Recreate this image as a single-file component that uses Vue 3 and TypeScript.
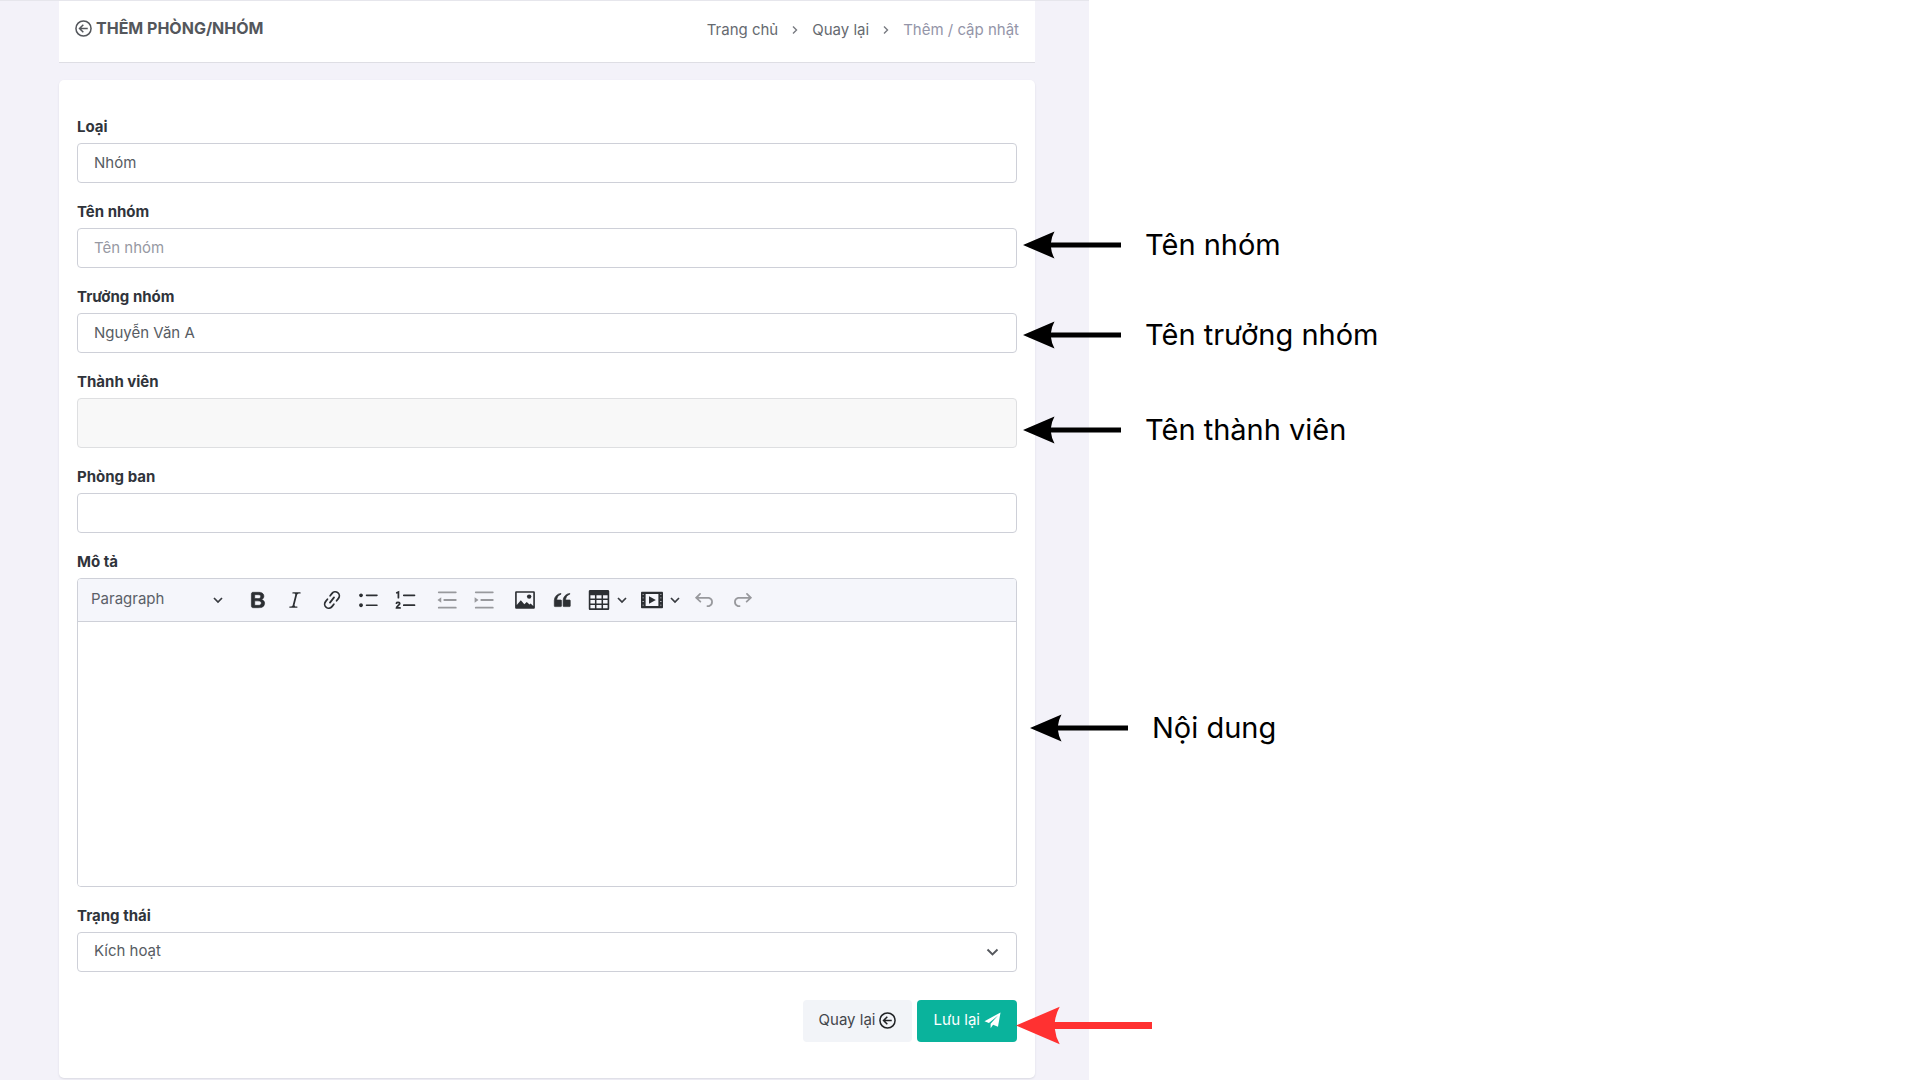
<script setup lang="ts">
import { ref } from 'vue'

interface Note {
  text: string
  top: number
  shift: number
  tone: 'plain' | 'alert'
}

const groupType = ref('Nhóm')
const groupName = ref('')
const leader = ref('Nguyễn Văn A')
const members = ref('')
const department = ref('')
const description = ref('')
const blockStyle = ref('Paragraph')
const status = ref('Kích hoạt')

// top is the arrow's middle line; shift is the arrow tip relative to the panel's right edge
const notes: Note[] = [
  { text: 'Tên nhóm', top: 244, shift: -66, tone: 'plain' },
  { text: 'Tên trưởng nhóm', top: 334, shift: -66, tone: 'plain' },
  { text: 'Tên thành viên', top: 429, shift: -66, tone: 'plain' },
  { text: 'Nội dung', top: 727, shift: -59, tone: 'plain' },
  { text: '', top: 1024, shift: -73, tone: 'alert' },
]
</script>

<template>
  <main class="page">
    <div class="panel">
      <header class="bar">
        <h1 class="title">
          <svg class="round-arrow" viewBox="0 0 18 18" aria-hidden="true">
            <circle cx="9" cy="9" r="8" />
            <path d="M13.5 9H5M8.8 5 4.8 9l4 4" />
          </svg>
          THÊM PHÒNG/NHÓM
        </h1>
        <nav class="crumbs" aria-label="Breadcrumb">
          <a href="#">Trang chủ</a>
          <svg class="crumb-sep" viewBox="0 0 6 10" aria-hidden="true"><path d="M1 1.5 4.5 5 1 8.5" /></svg>
          <a href="#">Quay lại</a>
          <svg class="crumb-sep" viewBox="0 0 6 10" aria-hidden="true"><path d="M1 1.5 4.5 5 1 8.5" /></svg>
          <span class="current">Thêm / cập nhật</span>
        </nav>
      </header>

      <form class="card" @submit.prevent>
        <div class="field">
          <label for="type">Loại</label>
          <input id="type" v-model="groupType" class="control" type="text" />
        </div>
        <div class="field">
          <label for="name">Tên nhóm</label>
          <input id="name" v-model="groupName" class="control" type="text" placeholder="Tên nhóm" />
        </div>
        <div class="field">
          <label for="leader">Trưởng nhóm</label>
          <input id="leader" v-model="leader" class="control" type="text" />
        </div>
        <div class="field">
          <label for="members">Thành viên</label>
          <input id="members" v-model="members" class="control tall" type="text" disabled />
        </div>
        <div class="field">
          <label for="department">Phòng ban</label>
          <input id="department" v-model="department" class="control" type="text" />
        </div>
        <div class="field">
          <label for="description">Mô tả</label>
          <div class="editor">
            <div class="toolbar" role="toolbar" aria-label="Editor">
              <span class="style-pick">
                <select v-model="blockStyle" aria-label="Heading">
                  <option>Paragraph</option>
                </select>
                <svg class="caret" viewBox="0 0 10 8" aria-hidden="true"><path d="M1 2l4 4 4-4" /></svg>
              </span>
              <div class="group">
                <button type="button" class="tool" aria-label="Bold">
                  <svg viewBox="0 0 20 20" class="heavy"><path d="M10.187 17H5.773c-.637 0-1.092-.138-1.364-.415-.273-.277-.409-.718-.409-1.323V4.738c0-.617.14-1.062.419-1.332.279-.27.73-.406 1.354-.406h4.68c.69 0 1.288.041 1.793.124.506.083.96.242 1.36.478.341.197.644.447.906.75a3.262 3.262 0 0 1 .808 2.162c0 1.401-.722 2.426-2.167 3.075C15.05 10.175 16 11.315 16 13.01a3.756 3.756 0 0 1-2.296 3.504 6.1 6.1 0 0 1-1.517.377c-.571.073-1.238.11-2 .11zm-.217-6.217H7v4.087h3.069c1.977 0 2.965-.69 2.965-2.072 0-.707-.256-1.22-.768-1.537-.512-.319-1.277-.478-2.296-.478zM7 5.13v3.619h2.606c.729 0 1.292-.067 1.69-.2a1.6 1.6 0 0 0 .91-.765c.165-.267.247-.566.247-.897 0-.707-.26-1.176-.778-1.409-.519-.232-1.31-.348-2.375-.348H7z" /></svg>
                </button>
                <button type="button" class="tool" aria-label="Italic">
                  <svg viewBox="0 0 20 20"><path d="m9.586 14.633.021.004c-.036.335.095.655.393.962.082.083.173.15.274.201h1.474a.6.6 0 1 1 0 1.2H5.304a.6.6 0 0 1 0-1.2h1.15c.474-.07.809-.182 1.005-.334.157-.122.291-.32.404-.597l2.416-9.55a1.053 1.053 0 0 0-.281-.823 1.12 1.12 0 0 0-.442-.296H8.15a.6.6 0 0 1 0-1.2h6.443a.6.6 0 1 1 0 1.2h-1.195c-.376.056-.65.155-.823.296-.215.175-.423.439-.623.79l-2.366 9.347z" /></svg>
                </button>
                <button type="button" class="tool" aria-label="Link">
                  <svg viewBox="0 0 20 20" class="line"><g transform="rotate(-52 10 10)"><path d="M8 6.3H5.200a3.700 3.700 0 0 0 0 7.400H8M12 6.300h2.800a3.700 3.700 0 0 1 0 7.400H12M7 10h6" /></g></svg>
                </button>
                <button type="button" class="tool" aria-label="Bulleted list">
                  <svg viewBox="0 0 20 20"><path d="M7 5.75c0 .414.336.75.75.75h9.5a.75.75 0 1 0 0-1.5h-9.5a.75.75 0 0 0-.75.75zm-6 0C1 4.784 1.777 4 2.75 4c.966 0 1.75.777 1.75 1.75 0 .966-.777 1.75-1.75 1.75C1.784 7.5 1 6.723 1 5.75zm6 9c0 .414.336.75.75.75h9.5a.75.75 0 1 0 0-1.5h-9.5a.75.75 0 0 0-.75.75zm-6 0c0-.966.777-1.75 1.75-1.75.966 0 1.75.777 1.75 1.75 0 .966-.777 1.75-1.75 1.75-.966 0-1.75-.777-1.75-1.75z" /></svg>
                </button>
                <button type="button" class="tool" aria-label="Numbered list">
                  <svg viewBox="0 0 20 20" class="line"><path d="M8 5.75h9.7M8 14.75h9.7M1.6 3.4l1.5-.6v5.1M1.3 12.9c.3-1 3-1.100 3 .3 0 1.200-2.800 2.300-2.900 4h3.200" /></svg>
                </button>
              </div>
              <div class="group faded">
                <button type="button" class="tool" aria-label="Decrease indent">
                  <svg viewBox="0 0 20 20" class="line"><path d="M2.500 3h15.500M7.500 10H18M2.500 17h15.500" /><path class="solid" d="M4.800 7.500v5L1.300 10z" /></svg>
                </button>
                <button type="button" class="tool" aria-label="Increase indent">
                  <svg viewBox="0 0 20 20" class="line"><path d="M2.500 3h15.500M7.500 10H18M2.500 17h15.500" /><path class="solid" d="M1.500 7.500v5L5 10z" /></svg>
                </button>
              </div>
              <div class="group">
                <button type="button" class="tool" aria-label="Insert image">
                  <svg viewBox="0 0 20 20"><path fill-rule="evenodd" d="M2.200 2h15.600c.7 0 1.200.5 1.200 1.200v13.600c0 .7-.5 1.200-1.200 1.200H2.200c-.7 0-1.200-.5-1.200-1.200V3.200C1 2.500 1.500 2 2.200 2zm.3 1.500v11l3.700-4.300 3.200 3.600 2.200-1.900 2.500 2.200 1-.9 2.400 2.300v-12z" /><circle cx="13.800" cy="6.900" r="2" /></svg>
                </button>
                <button type="button" class="tool" aria-label="Block quote">
                  <svg viewBox="0 0 20 20" class="heavy"><path d="M3 10.423a6.500 6.500 0 0 1 6.056-6.408l.038.670C6.448 5.423 5.354 7.663 5.220 10H9c.552 0 .5.432.5.986v4.511c0 .554-.448.503-1 .503h-5c-.552 0-.5-.449-.5-1.003v-4.574zm8 0a6.500 6.500 0 0 1 6.056-6.408l.038.670c-2.646.739-3.740 2.979-3.873 5.315H17c.552 0 .5.432.5.986v4.511c0 .554-.448.503-1 .503h-5c-.552 0-.5-.449-.5-1.003v-4.574z" /></svg>
                </button>
                <button type="button" class="tool wide" aria-label="Insert table">
                  <svg viewBox="0 0 20 20"><path fill-rule="evenodd" d="M2 .8h16c.8 0 1.300.6 1.300 1.300v15.800c0 .8-.6 1.300-1.300 1.300H2c-.8 0-1.300-.6-1.300-1.300V2.100C.7 1.300 1.200.8 2 .8zM2.200 5.600v3.100h4.100V5.600zm5.500 0v3.100h4.600V5.600zm6 0v3.100h4.100V5.600zM2.200 10v3.100h4.100V10zm5.500 0v3.100h4.600V10zm6 0v3.100h4.100V10zM2.200 14.500v3.100h4.100v-3.100zm5.500 0v3.100h4.600v-3.100zm6 0v3.100h4.100v-3.100z" /></svg>
                  <svg class="caret" viewBox="0 0 10 8"><path d="M1 2l4 4 4-4" /></svg>
                </button>
                <button type="button" class="tool wide" aria-label="Insert media">
                  <svg viewBox="0 0 20 20"><path fill-rule="evenodd" d="M1 2.500h18c.6 0 1 .4 1 1v13c0 .6-.4 1-1 1H1c-.6 0-1-.4-1-1v-13c0-.6.4-1 1-1zM4.200 4.500v11h11.600v-11zM1.500 4.700v.8h.9v-.8zm0 3v.8h.9v-.8zm0 3.300v.8h.9V11zm0 3.300v.8h.9v-.8zM17.600 4.700v.8h.9v-.8zm0 3v.8h.9v-.8zm0 3.300v.8h.9V11zm0 3.300v.8h.9v-.8z" /><path d="M7.300 6.500v7L13.500 10z" /></svg>
                  <svg class="caret" viewBox="0 0 10 8"><path d="M1 2l4 4 4-4" /></svg>
                </button>
                <button type="button" class="tool faded" aria-label="Undo">
                  <svg viewBox="0 0 20 20" class="line"><path d="M5.500 4.500 2 8l3.800 3.500M2.300 8h11.200a3.900 3.900 0 0 1 .2 7.500h-1.500" /></svg>
                </button>
                <button type="button" class="tool faded" aria-label="Redo">
                  <svg viewBox="0 0 20 20" class="line"><path d="M14.500 4.500 18 8l-3.800 3.500M17.700 8H6.500a3.900 3.900 0 0 0-.2 7.500h1.500" /></svg>
                </button>
              </div>
            </div>
            <textarea id="description" v-model="description"></textarea>
          </div>
        </div>
        <div class="field">
          <label for="status">Trạng thái</label>
          <div class="select-box">
            <select id="status" v-model="status" class="control">
              <option>Kích hoạt</option>
            </select>
            <svg class="caret big" viewBox="0 0 10 8" aria-hidden="true"><path d="M1 2l4 4 4-4" /></svg>
          </div>
        </div>
        <div class="actions">
          <button type="button" class="btn light">
            Quay lại
            <svg class="round-arrow" viewBox="0 0 18 18" aria-hidden="true">
              <circle cx="9" cy="9" r="8" />
              <path d="M13.500 9H5M8.800 5 4.800 9l4 4" />
            </svg>
          </button>
          <button type="submit" class="btn primary">
            Lưu lại
            <svg class="plane" viewBox="0 0 18 18" aria-hidden="true">
              <path d="M17.500.5 14.800 15.600 9.600 13.400 7 17.300V12.400L14.800 3.800 5.200 11.600.5 9.700z" />
            </svg>
          </button>
        </div>
      </form>

      <div
        v-for="note in notes"
        :key="note.top"
        class="note"
        :class="note.tone"
        :style="{ top: note.top + 'px', marginLeft: note.shift + 'px' }"
      >
        <svg class="arrow" viewBox="0 0 98 28" aria-hidden="true">
          <path d="M0 14 31.500.5Q28.500 6 28 11.500H98v5H28Q28.500 22 31.500 27.500z" />
        </svg>
        <span v-if="note.text">{{ note.text }}</span>
      </div>
    </div>
  </main>
</template>

<style>
body {
  margin: 0;
  background: #fff;
}
</style>

<style scoped>
.page {
  font-family: Inter, "Noto Sans", sans-serif;
  font-size: 15px;
  line-height: 22px;
  color: #575c63;
}
.page * {
  box-sizing: border-box;
}
.panel {
  position: relative;
  width: 56.72%;
  min-height: 100vh;
  padding: 0 54px 3px 59px;
  border-top: 1px solid #e6e6ec;
  background: #f3f2f9;
}
.bar {
  display: flex;
  justify-content: space-between;
  height: 62px;
  padding: 16px 16px 0;
  background: #fff;
  border-bottom: 1px solid #dedee4;
}
.title {
  display: flex;
  align-items: center;
  gap: 4px;
  height: 22px;
  margin: 0;
  font-size: 16px;
  font-weight: 700;
  color: #54575c;
}
.round-arrow {
  width: 17px;
  height: 17px;
  fill: none;
  stroke: currentColor;
  stroke-width: 1.6;
}
.crumbs {
  display: flex;
  align-items: center;
  gap: 14px;
  height: 26px;
}
.crumbs a {
  color: #666a70;
  text-decoration: none;
}
.crumbs .current {
  color: #9495a8;
}
.crumb-sep {
  width: 6px;
  height: 10px;
  fill: none;
  stroke: #777a80;
  stroke-width: 1.4;
}
.card {
  display: flex;
  flex-direction: column;
  gap: 18px;
  margin-top: 17px;
  padding: 36px 18px;
  background: #fff;
  border-radius: 5px;
  box-shadow: 0 1px 2px #d9d9e2;
}
.field {
  display: flex;
  flex-direction: column;
  gap: 5px;
}
.field label {
  height: 22px;
  font-weight: 700;
  color: #30343b;
}
.control {
  width: 100%;
  height: 40px;
  padding: 0 16px 2px;
  border: 1px solid #ced0d8;
  border-radius: 4px;
  background: #fff;
  font: inherit;
  color: inherit;
  appearance: none;
}
.control.tall {
  height: 50px;
  background: #f8f8f8;
  border-color: #dedfe1;
}
.control::placeholder {
  color: #9799a3;
  opacity: 1;
}
.editor {
  border: 1px solid #ced0d8;
  border-radius: 4px;
  overflow: hidden;
}
.toolbar {
  display: flex;
  align-items: center;
  gap: 4px;
  height: 43px;
  padding: 0 13px;
  background: #f5f6fb;
  border-bottom: 1px solid #ced0d8;
}
.style-pick {
  position: relative;
  display: flex;
  align-items: center;
  width: 144px;
}
.style-pick select {
  width: 100%;
  padding: 0 0 2px;
  border: 0;
  background: none;
  font: inherit;
  color: #5b6068;
  appearance: none;
}
.style-pick .caret {
  position: absolute;
  right: 12px;
}
.caret {
  width: 10px;
  height: 8px;
  fill: none;
  stroke: #383b40;
  stroke-width: 1.7;
  pointer-events: none;
}
.group {
  display: flex;
}
.tool {
  display: flex;
  align-items: center;
  justify-content: center;
  width: 37px;
  height: 36px;
  padding: 0;
  border: 0;
  background: none;
  color: #2c2f33;
}
.tool.wide {
  justify-content: flex-start;
  gap: 7px;
  width: 53px;
  padding-left: 8px;
}
.tool svg:not(.caret) {
  width: 22px;
  height: 22px;
  fill: currentColor;
}
.tool svg.line {
  fill: none;
  stroke: currentColor;
  stroke-width: 1.6;
  stroke-linecap: round;
}
.tool svg.heavy {
  stroke: currentColor;
  stroke-width: 0.6;
}
.tool .solid {
  fill: currentColor;
  stroke: none;
}
.tool.faded,
.faded .tool {
  color: #98999d;
}
textarea {
  display: block;
  width: 100%;
  height: 264px;
  padding: 12px;
  border: 0;
  resize: none;
  outline: 0;
  font: inherit;
}
.select-box {
  position: relative;
}
.select-box .control {
  display: block;
}
.caret.big {
  position: absolute;
  top: 15px;
  right: 18px;
  width: 13px;
  height: 10px;
  stroke: #55585d;
  stroke-width: 1.5;
}
.actions {
  display: flex;
  justify-content: flex-end;
  gap: 5px;
  margin-top: 10px;
}
.btn {
  display: flex;
  align-items: center;
  gap: 4px;
  height: 42px;
  padding: 0 16px 2px;
  border: 0;
  border-radius: 4px;
  font: inherit;
}
.btn.light {
  background: #f2f4f8;
  color: #43464b;
}
.btn.light svg {
  color: #202225;
}
.btn.primary {
  background: #0ab39c;
  color: #fff;
}
.plane {
  width: 17px;
  height: 17px;
  fill: currentColor;
}
.note {
  position: absolute;
  left: 100%;
  display: flex;
  align-items: center;
  gap: 24px;
  height: 0;
  font-size: 29px;
  line-height: 36px;
  white-space: nowrap;
  color: #000;
}
.arrow {
  flex: none;
  width: 98px;
  height: 28px;
  fill: currentColor;
}
.note.alert {
  color: #ff3131;
}
.note.alert .arrow {
  width: 136px;
  height: 39px;
}
</style>
